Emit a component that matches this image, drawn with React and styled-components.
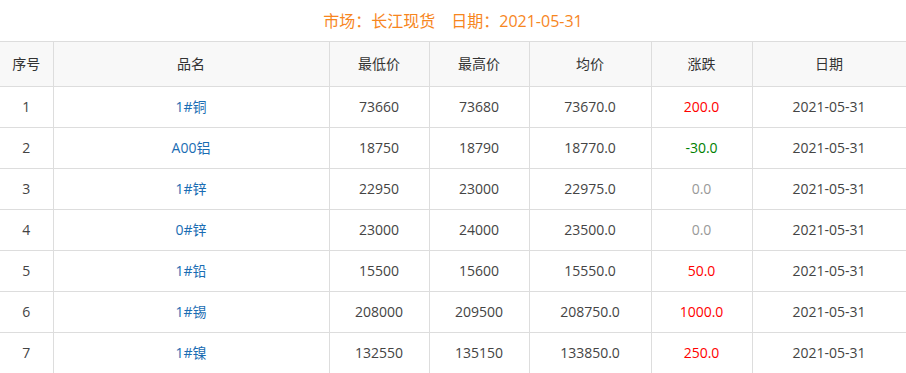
import React from "react";
import styled, { createGlobalStyle } from "styled-components";

const Global = createGlobalStyle`
  html, body { margin: 0; padding: 0; background: #fff; }
  body { font-family: "Open Sans", "Noto Sans CJK SC", sans-serif; color: #333; }
`;

const Wrap = styled.div`
  width: 906px;
`;

const Title = styled.div`
  height: 39px;
  padding-bottom: 2px;
  display: flex;
  align-items: center;
  justify-content: center;
  font-size: 16px;
  color: #f7861e;
  white-space: pre;
`;

const Table = styled.table`
  width: 906px;
  border-collapse: collapse;
  table-layout: fixed;
  font-size: 14px;
`;

const Th = styled.th`
  height: 42px;
  padding: 0 0 2px 0;
  background: #f8f8f8;
  font-weight: normal;
  color: #333;
  border: 1px solid #dddddd;
  border-left: ${(p) => (p.$first ? "none" : "1px solid #ddd")};
  text-align: center;
`;

const Td = styled.td`
  height: 38px;
  padding: 0 0 2px 0;
  text-align: center;
  color: ${(p) => p.$color || "#444"};
  border: 1px solid #dddddd;
  border-left: ${(p) => (p.$first ? "none" : "1px solid #ddd")};
`;

const cols = [53, 276, 100, 100, 122, 101, 154];
const heads = ["序号", "品名", "最低价", "最高价", "均价", "涨跌", "日期"];

const rows = [
  ["1", "1#铜", "73660", "73680", "73670.0", "200.0"],
  ["2", "A00铝", "18750", "18790", "18770.0", "-30.0"],
  ["3", "1#锌", "22950", "23000", "22975.0", "0.0"],
  ["4", "0#锌", "23000", "24000", "23500.0", "0.0"],
  ["5", "1#铅", "15500", "15600", "15550.0", "50.0"],
  ["6", "1#锡", "208000", "209500", "208750.0", "1000.0"],
  ["7", "1#镍", "132550", "135150", "133850.0", "250.0"],
];

const changeColor = (v) => {
  const n = parseFloat(v);
  if (n > 0) return "#ff0000";
  if (n < 0) return "#008000";
  return "#999999";
};

export default function App() {
  return (
    <Wrap>
      <Global />
      <Title>{"市场：长江现货　日期：2021-05-31"}</Title>
      <Table>
        <colgroup>
          {cols.map((w, i) => (
            <col key={i} style={{ width: w }} />
          ))}
        </colgroup>
        <thead>
          <tr>
            {heads.map((h, i) => (
              <Th key={h} $first={i === 0}>{h}</Th>
            ))}
          </tr>
        </thead>
        <tbody>
          {rows.map((r) => (
            <tr key={r[0]}>
              <Td $first>{r[0]}</Td>
              <Td $color="#1a6db3">{r[1]}</Td>
              <Td>{r[2]}</Td>
              <Td>{r[3]}</Td>
              <Td>{r[4]}</Td>
              <Td $color={changeColor(r[5])}>{r[5]}</Td>
              <Td>2021-05-31</Td>
            </tr>
          ))}
        </tbody>
      </Table>
    </Wrap>
  );
}
